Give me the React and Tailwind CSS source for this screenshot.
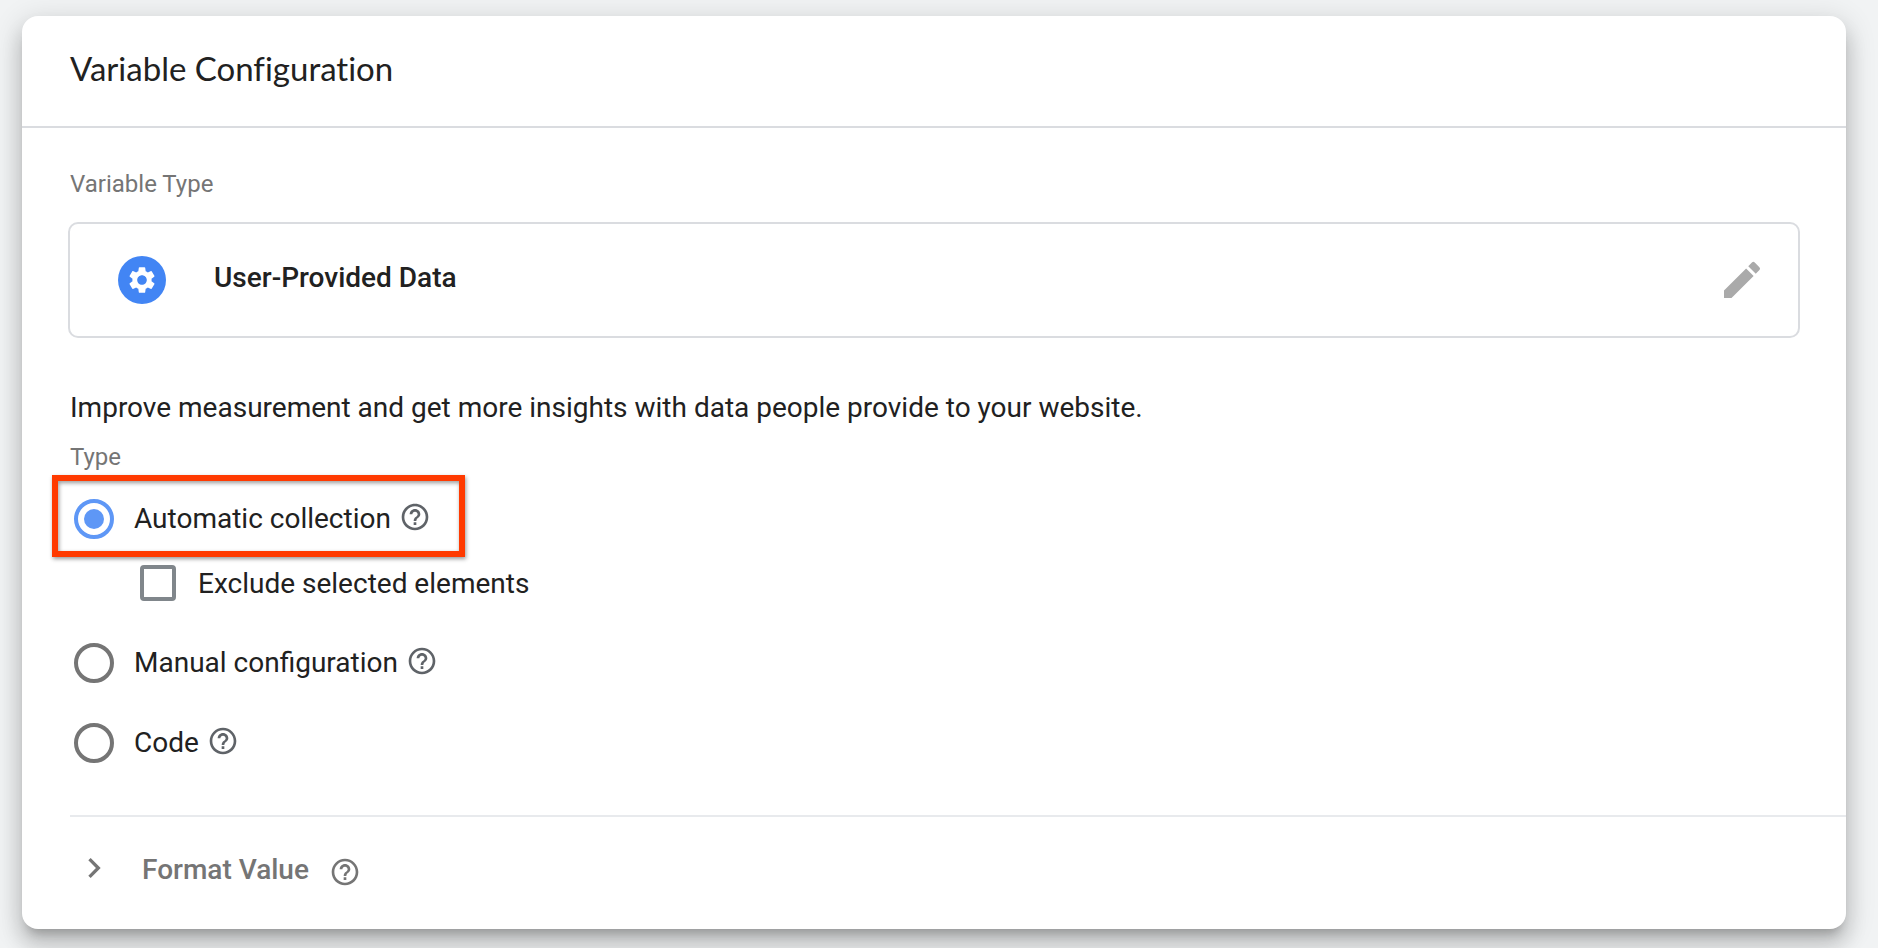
import React, { useState } from 'react'
import { MdSettings, MdEdit, MdHelpOutline, MdChevronRight } from 'react-icons/md'

const collectionTypes = [
  { id: 'automatic', label: 'Automatic collection' },
  { id: 'manual', label: 'Manual configuration' },
  { id: 'code', label: 'Code' },
]

const HelpButton = ({ topic, customClasses = 'text-[#5f6368]' }) => (
  <button type="button" aria-label={`Help: ${topic}`} className={`shrink-0 cursor-pointer ${customClasses}`}>
    <MdHelpOutline className="size-8" />
  </button>
)

const RadioRow = ({ option, checked, onChange, highlighted }) => (
  <div className="relative flex h-12 items-center self-start">
    <input
      type="radio"
      id={option.id}
      name="collectionType"
      checked={checked}
      onChange={onChange}
      className="grid size-10 shrink-0 appearance-none place-items-center rounded-full border-4 border-[#757575] checked:border-[#5e97f6] checked:before:size-5 checked:before:rounded-full checked:before:bg-[#5e97f6] checked:before:content-['']"
    />
    <label htmlFor={option.id} className="pl-5 pr-2 text-[28px] leading-10">
      {option.label}
    </label>
    <div className="flex pb-1">
      <HelpButton topic={option.label} />
    </div>
    {highlighted && (
      <div className="pointer-events-none absolute -top-5 -right-[34px] -left-[22px] h-[82px] border-[6px] border-[#ff3a00] shadow-[1px_2px_4px_rgba(0,0,0,0.4),inset_1px_2px_4px_rgba(0,0,0,0.4)]" />
    )}
  </div>
)

const App = () => {
  const [type, setType] = useState('automatic')
  const [exclude, setExclude] = useState(false)

  return (
    <div className="min-h-screen bg-[#f1f3f4] pt-4 pr-8 pb-[19px] pl-[22px] font-['Roboto',sans-serif] text-[#212121]">
      <section className="rounded-2xl bg-white shadow-[0_10px_10px_-6px_rgba(0,0,0,0.2),0_16px_20px_2px_rgba(0,0,0,0.14),0_6px_28px_4px_rgba(0,0,0,0.12)]">
        <header className="border-b-2 border-[#dadce0] px-12 pt-8 pb-[38px]">
          <h1 className="font-['Lato',sans-serif] text-[33px] leading-10 [font-variant-ligatures:none]">
            Variable Configuration
          </h1>
        </header>

        <div className="pt-10 pb-12 pl-12">
          <h2 className="text-2xl leading-8 text-[#757575]">Variable Type</h2>
          <div className="mt-[22px] -ml-0.5 mr-[46px] flex h-[116px] items-center rounded-[10px] border-2 border-[#dadce0] pr-8 pl-12">
            <span className="flex size-12 shrink-0 items-center justify-center rounded-full bg-[#4285f4] text-white">
              <MdSettings className="size-8" />
            </span>
            <p className="flex-1 pb-1 pl-12 text-[28px] leading-10 font-medium">User-Provided Data</p>
            <button type="button" aria-label="Edit variable type" className="cursor-pointer text-[#aaaaaa]">
              <MdEdit className="size-12" />
            </button>
          </div>

          <p className="mt-[50px] text-[28px] leading-10">
            Improve measurement and get more insights with data people provide to your website.
          </p>

          <fieldset className="mt-[13px]">
            <legend className="text-2xl leading-8 text-[#757575]">Type</legend>
            <div className="mt-[22px] flex flex-col gap-8 pl-1">
              {collectionTypes.map((option) => (
                <div key={option.id} className="flex flex-col">
                  <RadioRow
                    option={option}
                    checked={type === option.id}
                    onChange={() => setType(option.id)}
                    highlighted={option.id === 'automatic'}
                  />
                  {option.id === 'automatic' && (
                    <div className="mt-5 mb-1 flex h-10 items-center pl-[66px]">
                      <input
                        type="checkbox"
                        id="exclude"
                        checked={exclude}
                        onChange={(e) => setExclude(e.target.checked)}
                        className="size-9 shrink-0 appearance-none rounded border-4 border-[#80868b] checked:bg-[#5e97f6]"
                      />
                      <label htmlFor="exclude" className="pt-0.5 pl-[22px] text-[28px] leading-10">
                        Exclude selected elements
                      </label>
                    </div>
                  )}
                </div>
              ))}
            </div>
          </fieldset>
        </div>

        <div className="ml-12 flex h-[114px] items-center border-t-2 border-[#e8eaed] pb-1.5 pl-1 text-[#757575]">
          <button type="button" className="flex cursor-pointer items-start text-[28px] leading-10 font-medium">
            <MdChevronRight className="mr-7 mb-1 size-10" />
            <span className="pt-0.5">Format Value</span>
          </button>
          <div className="flex pt-1 pl-5">
            <HelpButton topic="Format Value" customClasses="text-[#757575]" />
          </div>
        </div>
      </section>
    </div>
  )
}

export default App
